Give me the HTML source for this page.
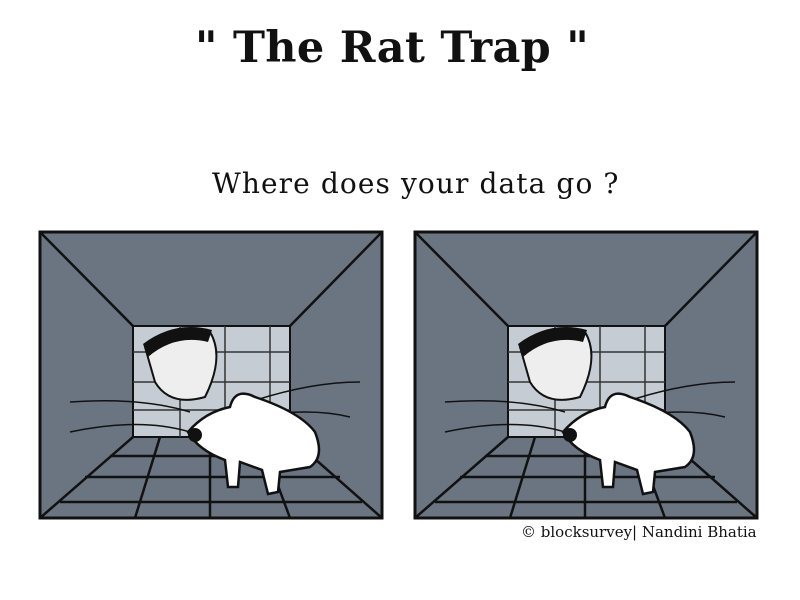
<!DOCTYPE html>
<html><head><meta charset="utf-8"><style>
body{margin:0;width:800px;height:600px;background:#fff;overflow:hidden;position:relative;font-family:"DejaVu Serif",serif}
.t{position:absolute;left:195px;top:23px;font-size:43px;font-weight:bold;color:#111;white-space:nowrap;letter-spacing:0.3px}
.s{position:absolute;left:212px;top:167px;font-size:28px;color:#111;white-space:nowrap;letter-spacing:1.1px}
.c{position:absolute;left:521px;top:523px;font-size:15px;color:#111;white-space:nowrap}
svg{position:absolute;left:0;top:0}
</style></head><body>
<div class="t">" The Rat Trap "</div>
<div class="s">Where does your data go ?</div>
<svg width="800" height="600">
<defs>
<g id="p">
<rect x="0" y="0" width="342" height="286" fill="#6b7582" stroke="#111" stroke-width="3"/>
<g stroke="#111" stroke-width="2.5" fill="none">
<line x1="0" y1="0" x2="93" y2="94"/><line x1="342" y1="0" x2="250" y2="94"/>
<line x1="0" y1="286" x2="93" y2="205"/><line x1="342" y1="286" x2="250" y2="205"/>
<line x1="20" y1="270" x2="322" y2="270"/><line x1="45" y1="245" x2="300" y2="245"/><line x1="70" y1="224" x2="276" y2="224"/>
<line x1="120" y1="205" x2="95" y2="286"/><line x1="170" y1="205" x2="170" y2="286"/><line x1="220" y1="205" x2="250" y2="286"/>
</g>
<rect x="93" y="94" width="157" height="111" fill="#c5ccd3" stroke="#111" stroke-width="2"/>
<g stroke="#333" stroke-width="1.5"><line x1="93" y1="120" x2="250" y2="120"/><line x1="93" y1="150" x2="250" y2="150"/><line x1="93" y1="178" x2="250" y2="178"/><line x1="140" y1="94" x2="140" y2="205"/><line x1="185" y1="94" x2="185" y2="205"/><line x1="230" y1="94" x2="230" y2="205"/></g>
<path d="M105 115 Q135 90 170 100 Q185 125 165 165 Q130 175 115 150Z" fill="#eee" stroke="#111" stroke-width="2"/>
<path d="M103 112 Q135 88 172 98 L168 110 Q135 102 108 125Z" fill="#111"/>
<g stroke="#111" stroke-width="1.5" fill="none"><path d="M30 170 Q100 165 150 180"/><path d="M30 200 Q100 185 150 200"/><path d="M210 170 Q270 150 320 150"/><path d="M210 185 Q270 175 310 185"/></g>
<path d="M148 200 Q165 180 190 175 Q195 155 215 165 Q260 180 275 200 Q285 225 270 235 L240 240 L238 260 L228 262 L222 238 L200 230 L198 255 L188 255 L185 228 Q158 218 148 200Z" fill="#fff" stroke="#111" stroke-width="2.5"/>
<circle cx="155" cy="203" r="7" fill="#111"/>
</g>
</defs>
<use href="#p" x="40" y="232"/>
<use href="#p" x="415" y="232"/>
</svg>
<div class="c">© blocksurvey| Nandini Bhatia</div>
</body></html>
